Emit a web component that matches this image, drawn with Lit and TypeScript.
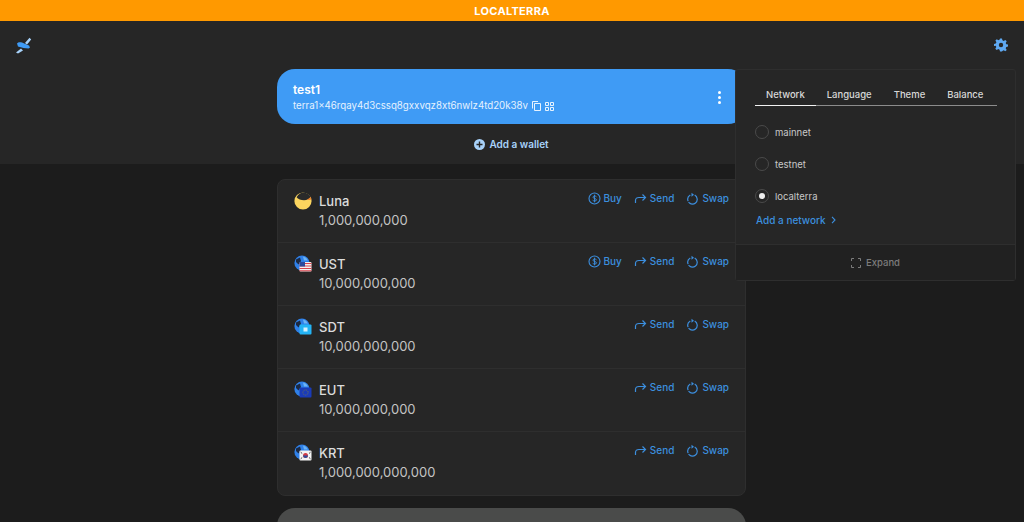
import { LitElement, html, css, svg } from 'lit';
import { customElement } from 'lit/decorators.js';

const globe = svg`<circle cx="8" cy="8" r="7.6" fill="#2f80e8"/><path d="M2 4.5 6 2.5 7 6 4.5 9.5 2 7Z" fill="#1b2a44"/><path d="M9 1.5a7 7 0 0 1 5 4H10Z" fill="#6cb4f5"/>`;

const tokenIcons: Record<string, any> = {
  Luna: svg`<circle cx="9" cy="9" r="8.6" fill="#fcd55f"/><path d="M2.6 5.2C4 2 7 .6 9.6.5c3 .1 5.800 1.900 7 4.500-1 1.700-3.500 3.200-6.600 3.200C7 8.200 4 7.300 2.600 5.200Z" fill="#2a2a2a"/><path d="M12.500 7.600c1.800-.500 3.200-1.400 4.100-2.600l.8 2.600c-1.300.5-3 .6-4.900 0Z" fill="#f0832c"/>`,
  UST: svg`${globe}<rect x="5.500" y="7" width="12" height="9.500" rx="1" fill="#f2f2f2"/><path d="M5.500 8.500h12M5.500 11h12M5.500 13.500h12M5.500 15.800h12" stroke="#d9434e" stroke-width="1.100"/><rect x="5.500" y="7" width="5.500" height="4.500" fill="#2b4a9c"/>`,
  SDT: svg`${globe}<rect x="5.500" y="6.500" width="12" height="10" rx="1" fill="#24b4f5"/><rect x="9.500" y="9.500" width="4" height="4" fill="#d5f1fd"/>`,
  EUT: svg`${globe}<rect x="5.500" y="6.500" width="12" height="10" rx="1" fill="#1a3bb8"/><circle cx="11.500" cy="11.500" r="2.600" fill="none" stroke="#7b7b40" stroke-width=".8" stroke-dasharray="1 .8"/>`,
  KRT: svg`${globe}<rect x="5.500" y="6.500" width="12" height="10" rx="1" fill="#f4f4f4"/><circle cx="11.500" cy="11.500" r="2.500" fill="#d23b45"/><path d="M9 11.500a2.500 2.500 0 0 0 5 0Z" fill="#2a4ea0"/><path d="M6.700 8.200l1.500 1.300M15 9.500l1.500-1.300M6.700 14.800l1.500-1.300M15 13.500l1.500 1.300" stroke="#333" stroke-width=".9"/>`,
};

const tokens = [
  { name: 'Luna', amount: '1,000,000,000', buy: true },
  { name: 'UST', amount: '10,000,000,000', buy: true },
  { name: 'SDT', amount: '10,000,000,000', buy: false },
  { name: 'EUT', amount: '10,000,000,000', buy: false },
  { name: 'KRT', amount: '1,000,000,000,000', buy: false },
];

const networks = [
  { name: 'mainnet', active: false },
  { name: 'testnet', active: false },
  { name: 'localterra', active: true },
];

const tabs = ['Network', 'Language', 'Theme', 'Balance'];

@customElement('app-root')
export class AppRoot extends LitElement {
  static styles = css`
    :host {
      display: block;
      position: relative;
      width: 1024px;
      height: 522px;
      overflow: hidden;
      background: #1c1c1c;
      font-family: Inter, "Noto Sans", sans-serif;
      color: #e0e0e0;
    }
    svg {
      display: block;
      flex: none;
    }
    .banner {
      height: 21px;
      background: #ff9900;
      color: #fff;
      font-size: 11px;
      font-weight: 700;
      letter-spacing: 0.3px;
      display: flex;
      align-items: center;
      justify-content: center;
    }
    .top {
      height: 143px;
      background: #262626;
      display: flex;
      flex-direction: column;
    }
    .toolbar {
      height: 48px;
      display: flex;
      align-items: center;
      justify-content: space-between;
      padding: 0 16px 0 15px;
    }
    .content {
      width: 469px;
      margin-left: 277px;
    }
    .wallet {
      height: 55px;
      box-sizing: border-box;
      background: #3f9bf5;
      border-radius: 18px;
      color: #fff;
      padding: 13px 16px 0;
      position: relative;
    }
    .wallet-name {
      font-size: 12px;
      font-weight: 600;
      line-height: 16px;
    }
    .wallet-address {
      display: flex;
      align-items: center;
      gap: 4px;
      font-size: 9.7px;
      line-height: 14px;
      margin-top: 1px;
      color: #e6f2fe;
    }
    .kebab {
      position: absolute;
      left: 441px;
      top: 22px;
      display: grid;
      gap: 2px;
    }
    .kebab i {
      width: 3px;
      height: 3px;
      border-radius: 50%;
      background: #fff;
    }
    .add-wallet {
      height: 40px;
      display: flex;
      align-items: center;
      justify-content: center;
      gap: 4px;
      font-size: 10px;
      font-weight: 600;
      color: #a8d2fa;
    }
    .list {
      box-sizing: border-box;
      height: 317px;
      margin-top: 15px;
      background: #262626;
      border: 1px solid #2e2e2e;
      border-radius: 8px;
    }
    .row {
      box-sizing: border-box;
      height: 63px;
      padding: 12px 16px 0 16px;
      display: flex;
      align-items: flex-start;
      border-bottom: 1px solid #2e2e2e;
    }
    .row:last-child {
      border-bottom: none;
    }
    .token-icon {
      margin-right: 7px;
    }
    .token {
      flex: 1;
    }
    .token-name {
      font-size: 13px;
      font-weight: 500;
      line-height: 18px;
      color: #dcdcdc;
    }
    .token-amount {
      font-size: 13px;
      line-height: 18px;
      margin-top: 1px;
      color: #c4c4c4;
    }
    .actions {
      display: flex;
      gap: 12px;
      margin-top: -1px;
    }
    .action {
      display: flex;
      align-items: center;
      gap: 3px;
      font-size: 10px;
      font-weight: 500;
      line-height: 14px;
      color: #3c8fdf;
    }
    .bottom-card {
      height: 60px;
      margin-top: 12px;
      background: #4a4b4a;
      border-radius: 18px 18px 0 0;
    }
    .menu {
      position: absolute;
      left: 735px;
      top: 69px;
      width: 281px;
      height: 212px;
      box-sizing: border-box;
      background: #262626;
      border: 1px solid #2e2e2e;
      border-radius: 3px;
      display: flex;
      flex-direction: column;
    }
    .menu-body {
      flex: 1;
      padding: 17px 18px 0 19px;
    }
    .tabs {
      display: flex;
      border-bottom: 1px solid #8c8c8c;
      height: 18px;
    }
    .tab {
      font-size: 9.500px;
      font-weight: 500;
      line-height: 15px;
      padding: 0 11px;
      color: #d8d8d8;
      height: 18px;
    }
    .tab.active {
      border-bottom: 1px solid #f2f2f2;
    }
    .network {
      height: 32px;
      display: flex;
      align-items: center;
      gap: 6px;
      font-size: 9.500px;
      color: #c8c8c8;
    }
    .networks {
      margin-top: 10px;
    }
    .radio {
      width: 12px;
      height: 12px;
      border: 1px solid #4a4a4a;
      border-radius: 50%;
      display: flex;
      align-items: center;
      justify-content: center;
    }
    .radio i {
      width: 6px;
      height: 6px;
      border-radius: 50%;
      background: #eee;
    }
    .add-network {
      display: flex;
      align-items: center;
      gap: 5px;
      font-size: 10px;
      font-weight: 500;
      color: #3c8fdf;
      margin: 2px 0 0 1px;
    }
    .expand {
      height: 35px;
      background: #212121;
      border-top: 1px solid #2e2e2e;
      display: flex;
      align-items: center;
      justify-content: center;
      gap: 5px;
      font-size: 9.500px;
      font-weight: 500;
      color: #7c7c7c;
    }
  `;

  renderAction(label: string) {
    const icon = label === 'Buy'
      ? svg`<circle cx="6.500" cy="6.500" r="5.500" stroke="currentColor" stroke-width="1.100" fill="none"/><path d="M8.500 4.800C8 3.900 5 3.500 5 5.200c0 1.800 3.500 .9 3.500 2.700 0 1.600-3 1.300-3.800.4M6.500 2.700v7.600" stroke="currentColor" fill="none" stroke-width=".9"/>`
      : label === 'Send'
        ? svg`<path d="M1.500 11V8.500C1.500 6.500 3 5.500 5 5.500h6.500M8.500 2.500l3 3-3 3" stroke="currentColor" stroke-width="1.200" fill="none"/>`
        : svg`<path d="M4.300 3C1.200 4.800 1 9 3.500 11a4.800 4.800 0 0 0 6 0c2.500-2 2.300-6.200-.8-8" stroke="currentColor" stroke-width="1.200" fill="none" stroke-dasharray="7 1 20"/><path d="M5.500 .8v4L8 2.800Z" fill="currentColor"/>`;
    return html`<span class="action"
      ><svg width="13" height="13" viewBox="0 0 13 13">${icon}</svg>${label}</span
    >`;
  }

  render() {
    return html`
      <div class="banner">LOCALTERRA</div>
      <div class="top">
        <div class="toolbar">
          <svg width="17" height="17" viewBox="0 0 17 17">
            <path d="M1 15.500 6 11.500 8 13.500 3 16.500ZM10 6 14.500 .8 16.200 2.600 12 7.500Z" fill="#a8d2fa" />
            <path d="M2 6.500C3 5 5 5 7 5.500L14 8.500 15 10.500 13.500 11.500 8.500 11 3 9.500Z" fill="#3f9bf5" />
          </svg>
          <svg width="14" height="14" viewBox="0 0 14 14">
            <path
              d="M6 .5h2l.4 1.800 1.300.6 1.600-1 1.400 1.400-1 1.600.6 1.300 1.800.4v2l-1.800.4-.6 1.300 1 1.600-1.400 1.400-1.600-1-1.300.6L8 13.500H6l-.4-1.800-1.300-.6-1.600 1-1.400-1.400 1-1.600-.6-1.300L0 7.900v-2l1.800-.4.600-1.300-1-1.600 1.400-1.400 1.600 1 1.300-.6Z"
              fill="#5fa9f2"
            />
            <circle cx="7" cy="7" r="2.200" fill="#262626" />
          </svg>
        </div>
        <div class="content">
          <div class="wallet">
            <div class="wallet-name">test1</div>
            <div class="wallet-address">
              terra1x46rqay4d3cssq8gxxvqz8xt6nwlz4td20k38v
              <svg width="9" height="10" viewBox="0 0 9 10">
                <path d="M2.500 2.500h6v7h-6ZM.5 7.500V.5h5.500" stroke="#e6f2fe" fill="none" />
              </svg>
              <svg width="9" height="9" viewBox="0 0 9 9">
                <path d="M.5.5h3v3h-3ZM5.500.5h3v3h-3ZM.5 5.500h3v3h-3ZM5.500 5.500h3v3h-3Z" stroke="#e6f2fe" fill="none" />
              </svg>
            </div>
            <div class="kebab"><i></i><i></i><i></i></div>
          </div>
          <div class="add-wallet">
            <svg width="11" height="11" viewBox="0 0 11 11">
              <circle cx="5.500" cy="5.500" r="5.500" fill="#a8d2fa" />
              <path d="M5.500 2.500v6M2.500 5.500h6" stroke="#262626" stroke-width="1.400" />
            </svg>
            Add a wallet
          </div>
        </div>
      </div>
      <div class="content">
        <div class="list">
          ${tokens.map(
            (t) => html`
              <div class="row">
                <svg class="token-icon" width="18" height="18" viewBox="0 0 18 18">${tokenIcons[t.name]}</svg>
                <div class="token">
                  <div class="token-name">${t.name}</div>
                  <div class="token-amount">${t.amount}</div>
                </div>
                <div class="actions">
                  ${t.buy ? this.renderAction('Buy') : ''} ${this.renderAction('Send')} ${this.renderAction('Swap')}
                </div>
              </div>
            `,
          )}
        </div>
        <div class="bottom-card"></div>
      </div>
      <div class="menu">
        <div class="menu-body">
          <div class="tabs">
            ${tabs.map((t, i) => html`<div class="tab ${i === 0 ? 'active' : ''}">${t}</div>`)}
          </div>
          <div class="networks">
            ${networks.map(
              (n) => html`
                <div class="network">
                  <span class="radio">${n.active ? html`<i></i>` : ''}</span>${n.name}
                </div>
              `,
            )}
          </div>
          <div class="add-network">
            Add a network
            <svg width="5" height="8" viewBox="0 0 5 8">
              <path d="M1 .8 4 4 1 7.200" stroke="currentColor" stroke-width="1.100" fill="none" />
            </svg>
          </div>
        </div>
        <div class="expand">
          <svg width="10" height="10" viewBox="0 0 10 10">
            <path d="M.5 3V.5H3M7 .5h2.500V3M9.500 7v2.500H7M3 9.500H.5V7" stroke="#7c7c7c" fill="none" />
          </svg>
          Expand
        </div>
      </div>
    `;
  }
}
